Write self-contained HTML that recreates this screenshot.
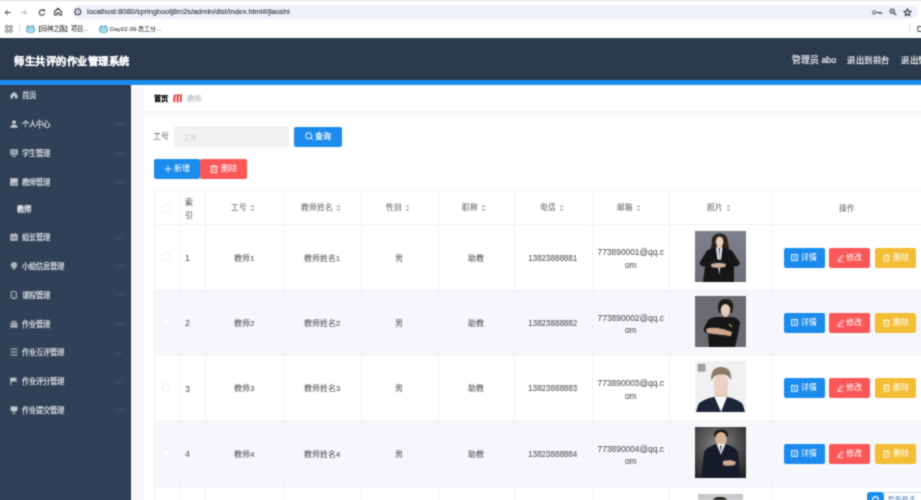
<!DOCTYPE html><html lang="zh-CN"><head><meta charset="utf-8"><style>
*{margin:0;padding:0;box-sizing:border-box}
html,body{width:921px;height:500px;overflow:hidden;background:#fff;font-family:"Liberation Sans",sans-serif}
div,span,svg{position:absolute}
.t{white-space:nowrap;will-change:transform}
.s{-webkit-text-stroke:0.06px currentColor}
</style></head><body><svg width="0" height="0" style="left:0;top:0"><filter id="bl" x="0" y="0" width="100%" height="100%" color-interpolation-filters="sRGB"><feConvolveMatrix order="3" kernelMatrix="1 2 1 2 8 2 1 2 1" divisor="20" edgeMode="duplicate"/></filter></svg><div id="root" style="left:0;top:0;width:940px;height:520px;filter:url(#bl)">
<div style="left:0px;top:0px;width:940px;height:38px;background:#fff"></div>
<div style="left:0px;top:0px;width:940px;height:1.3px;background:#e3e3e3"></div>
<div style="left:71.5px;top:4.5px;width:846px;height:14.5px;background:#edf1f9;border-radius:7.5px"></div>
<svg style="left:3.5px;top:8.5px;" width="8" height="7" viewBox="0 0 8 7"><path d="M6.8 3.5H1.2M3.8 0.8L1 3.5L3.8 6.2" stroke="#3c4043" stroke-width="1" fill="none"/></svg>
<svg style="left:19.5px;top:8.5px;" width="8" height="7" viewBox="0 0 8 7"><path d="M1 3.5H6.6M4 0.8L6.8 3.5L4 6.2" stroke="#b4b7bb" stroke-width="1" fill="none"/></svg>
<svg style="left:37.5px;top:8.5px;" width="8" height="7" viewBox="0 0 8 7"><path d="M6.2 2A2.7 2.7 0 1 0 6.6 4.4" stroke="#3c4043" stroke-width="1.1" fill="none"/><path d="M4.6 0.6H7V3Z" fill="#3c4043"/></svg>
<svg style="left:53px;top:7px;" width="10" height="9" viewBox="0 0 10 9"><path d="M1.5 4.5L5 1.3L8.5 4.5V8H6.2V5.8H3.8V8H1.5Z" stroke="#3c4043" stroke-width="1.1" fill="none"/></svg>
<svg style="left:74px;top:7.8px;" width="8" height="8" viewBox="0 0 8 8"><circle cx="3.8" cy="3.8" r="3" stroke="#3c4043" stroke-width="1.1" fill="none"/><path d="M3.8 2.5V4.3" stroke="#3c4043" stroke-width="1"/></svg>
<div class="t" style="left:87.3px;top:7.6px;font-size:7.4px;line-height:7.4px;color:#303134;-webkit-text-stroke:0.1px #303134">localhost:8080/springbootj8m2s/admin/dist/index.html#/jiaoshi</div>
<svg style="left:872px;top:9.5px;" width="11" height="6" viewBox="0 0 11 6"><circle cx="2.2" cy="2.5" r="1.7" stroke="#505458" stroke-width="1" fill="none"/><path d="M4 2.5H9.5V4.3M7.5 2.5V4" stroke="#505458" stroke-width="1" fill="none"/></svg>
<svg style="left:888.5px;top:8px;" width="8" height="8" viewBox="0 0 8 8"><circle cx="3.2" cy="3.2" r="2.3" stroke="#3c4043" stroke-width="1" fill="none"/><path d="M4.9 4.9L7.2 7.2" stroke="#3c4043" stroke-width="1.1"/><path d="M2 3.2H4.4M3.2 2V4.4" stroke="#3c4043" stroke-width="0.6"/></svg>
<svg style="left:903px;top:7.8px;" width="9" height="9" viewBox="0 0 9 9"><path d="M4.5 0.8L5.5 3.2L8.2 3.4L6.1 5.1L6.8 7.8L4.5 6.3L2.2 7.8L2.9 5.1L0.8 3.4L3.5 3.2Z" stroke="#3c4043" stroke-width="1.1" fill="none" stroke-linejoin="round"/></svg>
<svg style="left:4.5px;top:25px;" width="8" height="8" viewBox="0 0 8 8"><g fill="none" stroke="#555" stroke-width="0.9"><rect x="0.5" y="0.5" width="2.6" height="2.6" rx="0.8"/><rect x="4.6" y="0.5" width="2.6" height="2.6" rx="0.8"/><rect x="0.5" y="4.6" width="2.6" height="2.6" rx="0.8"/><rect x="4.6" y="4.6" width="2.6" height="2.6" rx="0.8"/></g></svg>
<div style="left:19.3px;top:25px;width:0.8px;height:7px;background:#d5d7da"></div>
<svg style="left:25.8px;top:25.2px;" width="9" height="8" viewBox="0 0 9 8"><path d="M1.6 2L2 0.4L3.6 1.8M7.2 2L6.8 0.4L5.2 1.8" fill="#4c9dc0" stroke="#4c9dc0" stroke-width="0.8"/><rect x="0.7" y="1.8" width="7.6" height="5.4" rx="1.6" fill="#c4eefa" stroke="#4c9dc0" stroke-width="1.1"/><circle cx="3.2" cy="4.3" r="0.75" fill="#3f87a6"/><circle cx="5.8" cy="4.3" r="0.75" fill="#3f87a6"/></svg>
<div class="t" style="left:34.8px;top:25.5px;font-size:6.3px;line-height:6.3px;color:#202124;">【码神之路】项目...</div>
<svg style="left:98.8px;top:25.2px;" width="9" height="8" viewBox="0 0 9 8"><path d="M1.6 2L2 0.4L3.6 1.8M7.2 2L6.8 0.4L5.2 1.8" fill="#4c9dc0" stroke="#4c9dc0" stroke-width="0.8"/><rect x="0.7" y="1.8" width="7.6" height="5.4" rx="1.6" fill="#c4eefa" stroke="#4c9dc0" stroke-width="1.1"/><circle cx="3.2" cy="4.3" r="0.75" fill="#3f87a6"/><circle cx="5.8" cy="4.3" r="0.75" fill="#3f87a6"/></svg>
<div class="t" style="left:109.5px;top:25.5px;font-size:6.1px;line-height:6.1px;color:#202124;">Day02-09-员工分...</div>
<div style="left:909.3px;top:25px;width:0.8px;height:7px;background:#d5d7da"></div>
<svg style="left:916.5px;top:26px;" width="6" height="6" viewBox="0 0 6 6"><path d="M5.5 0.6H0.8V5.4H5.5" stroke="#3c4043" stroke-width="1" fill="none"/></svg>
<div style="left:0px;top:38.3px;width:940px;height:41.7px;background:#2c3a4d"></div>
<div class="t" style="left:14.2px;top:56.5px;font-size:10.3px;line-height:10.3px;color:#fff;font-weight:bold;-webkit-text-stroke:0.2px #fff;letter-spacing:0.5px">师生共评的作业管理系统</div>
<div class="t" style="left:792px;top:56px;font-size:8.8px;line-height:8.8px;color:#fff;-webkit-text-stroke:0.15px #fff">管理员 abo</div>
<div class="t" style="left:847px;top:56.3px;font-size:8.3px;line-height:8.3px;color:#fff;-webkit-text-stroke:0.15px #fff;letter-spacing:0.6px">退出到前台</div>
<div class="t" style="left:901px;top:56.3px;font-size:8.3px;line-height:8.3px;color:#fff;-webkit-text-stroke:0.15px #fff;letter-spacing:0.6px">退出登录</div>
<div style="left:0px;top:80px;width:940px;height:5px;background:#1b8ced"></div>
<div style="left:0px;top:85px;width:131px;height:435px;background:#304157"></div>
<svg style="left:9.5px;top:91px;" width="8" height="8" viewBox="0 0 8 8"><path d="M0.5 4L4 0.8L7.5 4V7.5H5V5.2H3V7.5H0.5Z" fill="#c4c9d1"/></svg>
<div class="t" style="left:22px;top:91.5px;font-size:7.45px;line-height:7.45px;color:#f4f5f7;-webkit-text-stroke:0.1px #f4f5f7">首页</div>
<svg style="left:9.5px;top:120px;" width="8" height="8" viewBox="0 0 8 8"><circle cx="4" cy="2.2" r="1.9" fill="#c4c9d1"/><path d="M0.3 7.8C0.5 5.2 2 4.6 4 4.6C6 4.6 7.5 5.2 7.7 7.8Z" fill="#c4c9d1"/></svg>
<div class="t" style="left:22px;top:120.5px;font-size:7.45px;line-height:7.45px;color:#f4f5f7;-webkit-text-stroke:0.1px #f4f5f7">个人中心</div>
<svg style="left:115px;top:121.5px;" width="9" height="5" viewBox="0 0 9 5"><path d="M1 1L4.5 3.5L8 1" stroke="#4f5e73" stroke-width="0.8" fill="none"/></svg>
<svg style="left:9.5px;top:149px;" width="8" height="8" viewBox="0 0 8 8"><rect x="0.3" y="0.3" width="7.4" height="5.4" fill="#c4c9d1"/><path d="M1.5 2H6.5M1.5 3.8H6.5" stroke="#304157" stroke-width="0.7"/><path d="M2 7.3H6" stroke="#c4c9d1" stroke-width="1.1"/></svg>
<div class="t" style="left:22px;top:149.5px;font-size:7.45px;line-height:7.45px;color:#f4f5f7;-webkit-text-stroke:0.1px #f4f5f7">学生管理</div>
<svg style="left:115px;top:150.5px;" width="9" height="5" viewBox="0 0 9 5"><path d="M1 1L4.5 3.5L8 1" stroke="#4f5e73" stroke-width="0.8" fill="none"/></svg>
<svg style="left:9.5px;top:178px;" width="8" height="8" viewBox="0 0 8 8"><rect x="0.2" y="0.2" width="7.6" height="7.6" fill="#c4c9d1"/><path d="M1 7L3.3 4L4.8 5.5L7 3.2V7Z" fill="#8a94a3"/></svg>
<div class="t" style="left:22px;top:178.5px;font-size:7.45px;line-height:7.45px;color:#f4f5f7;-webkit-text-stroke:0.1px #f4f5f7">教师管理</div>
<svg style="left:115px;top:179.5px;" width="9" height="5" viewBox="0 0 9 5"><path d="M1 3.5L4.5 1L8 3.5" stroke="#4f5e73" stroke-width="0.8" fill="none"/></svg>
<svg style="left:9.5px;top:233px;" width="8" height="8" viewBox="0 0 8 8"><rect x="0.3" y="1.2" width="7.4" height="6.5" fill="#c4c9d1"/><path d="M2.5 0V2M5.5 0V2" stroke="#c4c9d1" stroke-width="0.9"/><path d="M1.5 3.8H6.5M1.5 5.6H6.5" stroke="#304157" stroke-width="0.7"/></svg>
<div class="t" style="left:22px;top:233.5px;font-size:7.45px;line-height:7.45px;color:#f4f5f7;-webkit-text-stroke:0.1px #f4f5f7">组长管理</div>
<svg style="left:115px;top:234.5px;" width="9" height="5" viewBox="0 0 9 5"><path d="M1 1L4.5 3.5L8 1" stroke="#4f5e73" stroke-width="0.8" fill="none"/></svg>
<svg style="left:9.5px;top:262px;" width="8" height="8" viewBox="0 0 8 8"><path d="M4 8L1 4.2A3.2 3.2 0 1 1 7 4.2Z" fill="#aab1bb"/></svg>
<div class="t" style="left:22px;top:262.5px;font-size:7.45px;line-height:7.45px;color:#f4f5f7;-webkit-text-stroke:0.1px #f4f5f7">小组信息管理</div>
<svg style="left:115px;top:263.5px;" width="9" height="5" viewBox="0 0 9 5"><path d="M1 1L4.5 3.5L8 1" stroke="#4f5e73" stroke-width="0.8" fill="none"/></svg>
<svg style="left:9.5px;top:291px;" width="8" height="8" viewBox="0 0 8 8"><rect x="1.3" y="0.4" width="5" height="7.2" rx="0.8" fill="none" stroke="#c4c9d1" stroke-width="1"/><path d="M3.2 6.2H4.4" stroke="#c4c9d1" stroke-width="0.8"/></svg>
<div class="t" style="left:22px;top:291.5px;font-size:7.45px;line-height:7.45px;color:#f4f5f7;-webkit-text-stroke:0.1px #f4f5f7">课程管理</div>
<svg style="left:115px;top:292.5px;" width="9" height="5" viewBox="0 0 9 5"><path d="M1 1L4.5 3.5L8 1" stroke="#4f5e73" stroke-width="0.8" fill="none"/></svg>
<svg style="left:9.5px;top:320px;" width="8" height="8" viewBox="0 0 8 8"><path d="M0.5 3.2H7.5V7.5H0.5Z" fill="#c4c9d1"/><path d="M2 1.2H6M1.2 2.2H6.8" stroke="#c4c9d1" stroke-width="0.8"/><path d="M0.5 5H7.5" stroke="#304157" stroke-width="0.7"/></svg>
<div class="t" style="left:22px;top:320.5px;font-size:7.45px;line-height:7.45px;color:#f4f5f7;-webkit-text-stroke:0.1px #f4f5f7">作业管理</div>
<svg style="left:115px;top:321.5px;" width="9" height="5" viewBox="0 0 9 5"><path d="M1 1L4.5 3.5L8 1" stroke="#4f5e73" stroke-width="0.8" fill="none"/></svg>
<svg style="left:9.5px;top:348px;" width="8" height="8" viewBox="0 0 8 8"><path d="M0.5 1H7.5M0.5 4H7.5M0.5 7H7.5" stroke="#c4c9d1" stroke-width="1"/></svg>
<div class="t" style="left:22px;top:348.5px;font-size:7.45px;line-height:7.45px;color:#f4f5f7;-webkit-text-stroke:0.1px #f4f5f7">作业互评管理</div>
<svg style="left:115px;top:349.5px;" width="9" height="5" viewBox="0 0 9 5"><path d="M1 1L4.5 3.5L8 1" stroke="#4f5e73" stroke-width="0.8" fill="none"/></svg>
<svg style="left:9.5px;top:377px;" width="8" height="8" viewBox="0 0 8 8"><path d="M0.8 0.5V8" stroke="#c4c9d1" stroke-width="1"/><path d="M0.8 0.8H7.3L5.8 2.6L7.3 4.4H0.8Z" fill="#c4c9d1"/></svg>
<div class="t" style="left:22px;top:377.5px;font-size:7.45px;line-height:7.45px;color:#f4f5f7;-webkit-text-stroke:0.1px #f4f5f7">作业评分管理</div>
<svg style="left:115px;top:378.5px;" width="9" height="5" viewBox="0 0 9 5"><path d="M1 1L4.5 3.5L8 1" stroke="#4f5e73" stroke-width="0.8" fill="none"/></svg>
<svg style="left:9.5px;top:406px;" width="8" height="8" viewBox="0 0 8 8"><path d="M0.5 0.5H7.5V3.5C7.5 5 6 5.5 4 5.5C2 5.5 0.5 5 0.5 3.5Z" fill="#c4c9d1"/><path d="M4 5.5V7.5M2.5 7.6H5.5" stroke="#c4c9d1" stroke-width="0.9"/></svg>
<div class="t" style="left:22px;top:406.5px;font-size:7.45px;line-height:7.45px;color:#f4f5f7;-webkit-text-stroke:0.1px #f4f5f7">作业提交管理</div>
<svg style="left:115px;top:407.5px;" width="9" height="5" viewBox="0 0 9 5"><path d="M1 1L4.5 3.5L8 1" stroke="#4f5e73" stroke-width="0.8" fill="none"/></svg>
<div class="t" style="left:17.2px;top:205.8px;font-size:7.45px;line-height:7.45px;color:#f4f5f7;font-weight:bold">教师</div>
<div style="left:131px;top:85px;width:809px;height:435px;background:#f7f9fc"></div>
<div style="left:143.8px;top:85px;width:796.2px;height:25.5px;background:#fff;box-shadow:0 1px 2px rgba(0,0,0,0.05)"></div>
<div class="t" style="left:153.9px;top:94.8px;font-size:7.2px;line-height:7.2px;color:#111;font-weight:bold;-webkit-text-stroke:0.1px #111">首页</div>
<svg style="left:172.5px;top:93.8px;" width="10" height="9" viewBox="0 0 10 9"><path d="M2.2 1.2Q0.6 4.5 1.6 8M5.2 0.8Q3.9 4.5 4.8 8.4M8.3 1.2Q7.1 4.5 7.9 8" stroke="#e6201c" stroke-width="1.7" fill="none"/><path d="M1.5 1.2L9 0.8" stroke="#b81d18" stroke-width="0.8"/></svg>
<div class="t" style="left:187px;top:94.5px;font-size:7.4px;line-height:7.4px;color:#aeb4be;-webkit-text-stroke:0.1px #aeb4be">教师</div>
<div style="left:143.8px;top:115.5px;width:796.2px;height:404.5px;background:#fff"></div>
<div class="t" style="left:153px;top:133px;font-size:8px;line-height:8px;color:#606266;">工号</div>
<div style="left:174.3px;top:126.3px;width:114.5px;height:21px;background:#f3f1f0;border-radius:2px"></div>
<div class="t" style="left:183px;top:133.5px;font-size:7.2px;line-height:7.2px;color:#c8cacf;">工号</div>
<div style="left:294.2px;top:126.8px;width:48px;height:19.8px;background:#1b8ced;border-radius:2px"></div>
<svg style="left:304.5px;top:132px;" width="9" height="9" viewBox="0 0 9 9"><circle cx="3.8" cy="3.8" r="3" stroke="#fff" stroke-width="1" fill="none"/><path d="M6 6L7.8 7.8" stroke="#fff" stroke-width="1"/></svg>
<div class="t" style="left:315px;top:132.5px;font-size:8px;line-height:8px;color:#fff;-webkit-text-stroke:0.2px #fff">查询</div>
<div style="left:153.7px;top:158.7px;width:46.5px;height:20px;background:#1b8ced;border-radius:2px"></div>
<svg style="left:163.5px;top:164.5px;" width="8" height="8" viewBox="0 0 8 8"><path d="M4 0.5V7.5M0.5 4H7.5" stroke="#fff" stroke-width="0.85"/></svg>
<div class="t" style="left:174px;top:164.5px;font-size:8px;line-height:8px;color:#fff;">新增</div>
<div style="left:200.2px;top:158.7px;width:46.5px;height:20px;background:#fa5758;border-radius:2px"></div>
<svg style="left:210px;top:164.5px;" width="8" height="8" viewBox="0 0 8 8"><rect x="1.2" y="1.8" width="5.6" height="5.7" stroke="#fff" stroke-width="0.9" fill="none"/><path d="M0.3 1.3H7.7M3 0.3H5M3 3.5V5.8M5 3.5V5.8" stroke="#fff" stroke-width="0.8"/></svg>
<div class="t" style="left:221px;top:164.5px;font-size:8px;line-height:8px;color:#fff;">删除</div>
<div style="left:153.8px;top:289.6px;width:786.2px;height:65.19999999999999px;background:#f5f7fa"></div>
<div style="left:153.8px;top:420.2px;width:786.2px;height:66.10000000000002px;background:#f5f7fa"></div>
<div style="left:153.8px;top:190.3px;width:786.2px;height:1px;background:#f1f2f6"></div>
<div style="left:153.8px;top:224.3px;width:786.2px;height:1px;background:#f1f2f6"></div>
<div style="left:153.8px;top:289.6px;width:786.2px;height:1px;background:#f1f2f6"></div>
<div style="left:153.8px;top:354.8px;width:786.2px;height:1px;background:#f1f2f6"></div>
<div style="left:153.8px;top:420.2px;width:786.2px;height:1px;background:#f1f2f6"></div>
<div style="left:153.8px;top:486.3px;width:786.2px;height:1px;background:#f1f2f6"></div>
<div style="left:153.8px;top:552px;width:786.2px;height:1px;background:#f1f2f6"></div>
<div style="left:153.8px;top:190.3px;width:1px;height:329.7px;background:#f1f2f6"></div>
<div style="left:179.6px;top:190.3px;width:1px;height:329.7px;background:#f1f2f6"></div>
<div style="left:204.6px;top:190.3px;width:1px;height:329.7px;background:#f1f2f6"></div>
<div style="left:283px;top:190.3px;width:1px;height:329.7px;background:#f1f2f6"></div>
<div style="left:361px;top:190.3px;width:1px;height:329.7px;background:#f1f2f6"></div>
<div style="left:437.5px;top:190.3px;width:1px;height:329.7px;background:#f1f2f6"></div>
<div style="left:514px;top:190.3px;width:1px;height:329.7px;background:#f1f2f6"></div>
<div style="left:591.5px;top:190.3px;width:1px;height:329.7px;background:#f1f2f6"></div>
<div style="left:669px;top:190.3px;width:1px;height:329.7px;background:#f1f2f6"></div>
<div style="left:771.2px;top:190.3px;width:1px;height:329.7px;background:#f1f2f6"></div>
<div style="left:162px;top:204.3px;width:8.5px;height:8.5px;border:1px solid #f0f1f4;border-radius:1.5px;background:#fff"></div>
<div class="t" style="left:185px;top:199.3px;font-size:7.9px;line-height:7.9px;color:#6e6e6e;-webkit-text-stroke:0.2px #6e6e6e">索</div>
<div class="t" style="left:185px;top:212px;font-size:7.9px;line-height:7.9px;color:#6e6e6e;-webkit-text-stroke:0.2px #6e6e6e">引</div>
<div class="t" style="left:204.1px;top:203.8px;width:78.4px;text-align:center;font-size:7.7px;line-height:8px;color:#727272;-webkit-text-stroke:0.12px #727272">工号<svg style="position:relative;display:inline-block;vertical-align:middle;margin-left:3px" width="5" height="8" viewBox="0 0 5 8"><path d="M0.4 3.1L2.5 1L4.6 3.1ZM0.4 4.9L2.5 7L4.6 4.9Z" fill="#9da1a8"/></svg></div>
<div class="t" style="left:281.5px;top:203.8px;width:78px;text-align:center;font-size:7.7px;line-height:8px;color:#727272;-webkit-text-stroke:0.12px #727272">教师姓名<svg style="position:relative;display:inline-block;vertical-align:middle;margin-left:3px" width="5" height="8" viewBox="0 0 5 8"><path d="M0.4 3.1L2.5 1L4.6 3.1ZM0.4 4.9L2.5 7L4.6 4.9Z" fill="#9da1a8"/></svg></div>
<div class="t" style="left:359.5px;top:203.8px;width:76.5px;text-align:center;font-size:7.7px;line-height:8px;color:#727272;-webkit-text-stroke:0.12px #727272">性别<svg style="position:relative;display:inline-block;vertical-align:middle;margin-left:3px" width="5" height="8" viewBox="0 0 5 8"><path d="M0.4 3.1L2.5 1L4.6 3.1ZM0.4 4.9L2.5 7L4.6 4.9Z" fill="#9da1a8"/></svg></div>
<div class="t" style="left:436.0px;top:203.8px;width:76.5px;text-align:center;font-size:7.7px;line-height:8px;color:#727272;-webkit-text-stroke:0.12px #727272">职称<svg style="position:relative;display:inline-block;vertical-align:middle;margin-left:3px" width="5" height="8" viewBox="0 0 5 8"><path d="M0.4 3.1L2.5 1L4.6 3.1ZM0.4 4.9L2.5 7L4.6 4.9Z" fill="#9da1a8"/></svg></div>
<div class="t" style="left:512.5px;top:203.8px;width:77.5px;text-align:center;font-size:7.7px;line-height:8px;color:#727272;-webkit-text-stroke:0.12px #727272">电话<svg style="position:relative;display:inline-block;vertical-align:middle;margin-left:3px" width="5" height="8" viewBox="0 0 5 8"><path d="M0.4 3.1L2.5 1L4.6 3.1ZM0.4 4.9L2.5 7L4.6 4.9Z" fill="#9da1a8"/></svg></div>
<div class="t" style="left:590.0px;top:203.8px;width:77.5px;text-align:center;font-size:7.7px;line-height:8px;color:#727272;-webkit-text-stroke:0.12px #727272">邮箱<svg style="position:relative;display:inline-block;vertical-align:middle;margin-left:3px" width="5" height="8" viewBox="0 0 5 8"><path d="M0.4 3.1L2.5 1L4.6 3.1ZM0.4 4.9L2.5 7L4.6 4.9Z" fill="#9da1a8"/></svg></div>
<div class="t" style="left:667.5px;top:203.8px;width:102.20000000000005px;text-align:center;font-size:7.7px;line-height:8px;color:#727272;-webkit-text-stroke:0.12px #727272">照片<svg style="position:relative;display:inline-block;vertical-align:middle;margin-left:3px" width="5" height="8" viewBox="0 0 5 8"><path d="M0.4 3.1L2.5 1L4.6 3.1ZM0.4 4.9L2.5 7L4.6 4.9Z" fill="#9da1a8"/></svg></div>
<div class="t s" style="left:772.2px;top:204.5px;width:149.79999999999995px;text-align:center;font-size:7.7px;line-height:7.7px;color:#707070;">操作</div>
<div style="left:161.5px;top:252.45000000000005px;width:8.5px;height:8.5px;border:1px solid #f0f1f4;border-radius:1.5px;background:#fff"></div>
<div class="t" style="left:185.3px;top:254.05000000000004px;font-size:9px;line-height:9px;color:#505256;">1</div>
<div class="t s" style="left:204.6px;top:254.85000000000005px;width:78.4px;text-align:center;font-size:7.9px;line-height:7.9px;color:#505256;">教师1</div>
<div class="t s" style="left:283px;top:254.85000000000005px;width:78px;text-align:center;font-size:7.9px;line-height:7.9px;color:#505256;">教师姓名1</div>
<div class="t s" style="left:361px;top:254.85000000000005px;width:76.5px;text-align:center;font-size:7.9px;line-height:7.9px;color:#505256;">男</div>
<div class="t s" style="left:437.5px;top:254.85000000000005px;width:76.5px;text-align:center;font-size:7.9px;line-height:7.9px;color:#505256;">助教</div>
<div class="t s" style="left:514px;top:254.65000000000003px;width:77.5px;text-align:center;font-size:8px;line-height:8px;color:#505256;transform:scaleY(1.18)">13823888881</div>
<div class="t s" style="left:591.5px;top:248.35000000000005px;width:77.5px;text-align:center;font-size:8.4px;line-height:8.4px;color:#505256;transform:scaleY(1.1)">773890001@qq.c</div>
<div class="t s" style="left:591.5px;top:261.15000000000003px;width:77.5px;text-align:center;font-size:8.4px;line-height:8.4px;color:#505256;transform:scaleY(1.1)">om</div>
<svg style="left:695.2px;top:230.9px;" width="51" height="51" viewBox="0 0 51 51"><defs><linearGradient id="p1" x1="0" y1="0" x2="0" y2="1"><stop offset="0" stop-color="#7e818c"/><stop offset="1" stop-color="#6c6f79"/></linearGradient><filter id="f1"><feGaussianBlur stdDeviation="0.5"/></filter></defs>
<rect width="51" height="51" fill="url(#p1)"/><g filter="url(#f1)">
<path d="M17 12C16 5 20 2.5 24.5 2.5C29 2.5 33 5 33 11L35 24L31 27H18L14 24Z" fill="#2f231e"/>
<ellipse cx="24.6" cy="10.8" rx="3.8" ry="5.2" fill="#ead0bd"/>
<path d="M22 15H27V18H22Z" fill="#e0c2ae"/>
<path d="M11 21C13 18 18 17 21 17H28C31 17 36 18 38 21L45 32C44 35 41 36 39 35L39 51H8L10 35C8 36 5 35 4.5 32Z" fill="#151519"/>
<path d="M21 16.5L24.2 44L27.5 16.5Z" fill="#eceef1"/>
<path d="M23.6 17L24.2 30L24.9 17Z" fill="#26384a"/>
<path d="M13 30C17 28 27 28 32 30L31 36C27 37 18 37 14 36Z" fill="#1b1b20"/>
<path d="M16 33C20 31.5 27 31.5 31 33L30 36C26 37 20 37 16.5 36Z" fill="#cfae9a"/>
</g></svg>
<div style="left:783.7px;top:247.75000000000006px;width:41.2px;height:19.8px;background:#1b8ced;border-radius:2px"></div>
<svg style="left:791px;top:254.05000000000007px;" width="7" height="7" viewBox="0 0 7 7"><rect x="0.6" y="0.6" width="5.8" height="5.8" stroke="#fff" stroke-width="0.9" fill="none"/><path d="M2 2.5H5M2 4.5H5" stroke="#fff" stroke-width="0.7"/></svg>
<div class="t" style="left:800.5px;top:253.75000000000006px;font-size:7.9px;line-height:7.9px;color:#fff;">详情</div>
<div style="left:828.9px;top:247.75000000000006px;width:41.2px;height:19.8px;background:#fa5758;border-radius:2px"></div>
<svg style="left:836.5px;top:253.75000000000006px;" width="7" height="8" viewBox="0 0 7 8"><path d="M1 7L1.6 4.8L5 1.2L6.2 2.4L2.8 6Z" stroke="#fff" stroke-width="0.8" fill="none"/><path d="M0.5 7.6H6.5" stroke="#fff" stroke-width="0.7"/></svg>
<div class="t" style="left:846px;top:253.75000000000006px;font-size:7.9px;line-height:7.9px;color:#fff;">修改</div>
<div style="left:874.5px;top:247.75000000000006px;width:41.2px;height:19.8px;background:#f3bd35;border-radius:2px"></div>
<svg style="left:882.5px;top:253.75000000000006px;" width="7" height="8" viewBox="0 0 7 8"><rect x="1" y="1.8" width="5" height="5.4" stroke="#fff" stroke-width="0.8" fill="none"/><path d="M0.2 1.3H6.8M2.6 0.4H4.4M2.6 3.5V5.5M4.4 3.5V5.5" stroke="#fff" stroke-width="0.7"/></svg>
<div class="t" style="left:892.5px;top:253.75000000000006px;font-size:7.9px;line-height:7.9px;color:#fff;">删除</div>
<div style="left:161.5px;top:317.70000000000005px;width:8.5px;height:8.5px;border:1px solid #f0f1f4;border-radius:1.5px;background:#fff"></div>
<div class="t" style="left:185.3px;top:319.30000000000007px;font-size:9px;line-height:9px;color:#505256;">2</div>
<div class="t s" style="left:204.6px;top:320.1px;width:78.4px;text-align:center;font-size:7.9px;line-height:7.9px;color:#505256;">教师2</div>
<div class="t s" style="left:283px;top:320.1px;width:78px;text-align:center;font-size:7.9px;line-height:7.9px;color:#505256;">教师姓名2</div>
<div class="t s" style="left:361px;top:320.1px;width:76.5px;text-align:center;font-size:7.9px;line-height:7.9px;color:#505256;">男</div>
<div class="t s" style="left:437.5px;top:320.1px;width:76.5px;text-align:center;font-size:7.9px;line-height:7.9px;color:#505256;">助教</div>
<div class="t s" style="left:514px;top:319.90000000000003px;width:77.5px;text-align:center;font-size:8px;line-height:8px;color:#505256;transform:scaleY(1.18)">13823888882</div>
<div class="t s" style="left:591.5px;top:313.6px;width:77.5px;text-align:center;font-size:8.4px;line-height:8.4px;color:#505256;transform:scaleY(1.1)">773890002@qq.c</div>
<div class="t s" style="left:591.5px;top:326.40000000000003px;width:77.5px;text-align:center;font-size:8.4px;line-height:8.4px;color:#505256;transform:scaleY(1.1)">om</div>
<svg style="left:695.2px;top:296.20000000000005px;" width="51" height="51" viewBox="0 0 51 51"><defs><filter id="f2"><feGaussianBlur stdDeviation="0.45"/></filter></defs>
<rect width="51" height="51" fill="#6c6c70"/><g filter="url(#f2)">
<path d="M23 13C22 6 26 3 31 3C36 3 39 6 38 13L37 17H24Z" fill="#1f1a18"/>
<ellipse cx="30.5" cy="14" rx="4.8" ry="6" fill="#e8cbb8"/>
<path d="M28 20H33V24H28Z" fill="#d8b8a2"/>
<path d="M12 26C14 22 19 21 24 21H36C40 21 44 23 45 27L43 38L40 51H14L13 38C10 37 8 35 9 32Z" fill="#141416"/>
<path d="M11 33C17 30 30 33 37 36L36 40C29 39 17 38 12 37Z" fill="#cba58e"/>
<path d="M34 28L37 31" stroke="#b89048" stroke-width="1.2"/>
</g></svg>
<div style="left:783.7px;top:313.00000000000006px;width:41.2px;height:19.8px;background:#1b8ced;border-radius:2px"></div>
<svg style="left:791px;top:319.30000000000007px;" width="7" height="7" viewBox="0 0 7 7"><rect x="0.6" y="0.6" width="5.8" height="5.8" stroke="#fff" stroke-width="0.9" fill="none"/><path d="M2 2.5H5M2 4.5H5" stroke="#fff" stroke-width="0.7"/></svg>
<div class="t" style="left:800.5px;top:319.00000000000006px;font-size:7.9px;line-height:7.9px;color:#fff;">详情</div>
<div style="left:828.9px;top:313.00000000000006px;width:41.2px;height:19.8px;background:#fa5758;border-radius:2px"></div>
<svg style="left:836.5px;top:319.00000000000006px;" width="7" height="8" viewBox="0 0 7 8"><path d="M1 7L1.6 4.8L5 1.2L6.2 2.4L2.8 6Z" stroke="#fff" stroke-width="0.8" fill="none"/><path d="M0.5 7.6H6.5" stroke="#fff" stroke-width="0.7"/></svg>
<div class="t" style="left:846px;top:319.00000000000006px;font-size:7.9px;line-height:7.9px;color:#fff;">修改</div>
<div style="left:874.5px;top:313.00000000000006px;width:41.2px;height:19.8px;background:#f3bd35;border-radius:2px"></div>
<svg style="left:882.5px;top:319.00000000000006px;" width="7" height="8" viewBox="0 0 7 8"><rect x="1" y="1.8" width="5" height="5.4" stroke="#fff" stroke-width="0.8" fill="none"/><path d="M0.2 1.3H6.8M2.6 0.4H4.4M2.6 3.5V5.5M4.4 3.5V5.5" stroke="#fff" stroke-width="0.7"/></svg>
<div class="t" style="left:892.5px;top:319.00000000000006px;font-size:7.9px;line-height:7.9px;color:#fff;">删除</div>
<div style="left:161.5px;top:383.0px;width:8.5px;height:8.5px;border:1px solid #f0f1f4;border-radius:1.5px;background:#fff"></div>
<div class="t" style="left:185.3px;top:384.6px;font-size:9px;line-height:9px;color:#505256;">3</div>
<div class="t s" style="left:204.6px;top:385.4px;width:78.4px;text-align:center;font-size:7.9px;line-height:7.9px;color:#505256;">教师3</div>
<div class="t s" style="left:283px;top:385.4px;width:78px;text-align:center;font-size:7.9px;line-height:7.9px;color:#505256;">教师姓名3</div>
<div class="t s" style="left:361px;top:385.4px;width:76.5px;text-align:center;font-size:7.9px;line-height:7.9px;color:#505256;">男</div>
<div class="t s" style="left:437.5px;top:385.4px;width:76.5px;text-align:center;font-size:7.9px;line-height:7.9px;color:#505256;">助教</div>
<div class="t s" style="left:514px;top:385.2px;width:77.5px;text-align:center;font-size:8px;line-height:8px;color:#505256;transform:scaleY(1.18)">13823888883</div>
<div class="t s" style="left:591.5px;top:378.9px;width:77.5px;text-align:center;font-size:8.4px;line-height:8.4px;color:#505256;transform:scaleY(1.1)">773890003@qq.c</div>
<div class="t s" style="left:591.5px;top:391.7px;width:77.5px;text-align:center;font-size:8.4px;line-height:8.4px;color:#505256;transform:scaleY(1.1)">om</div>
<svg style="left:695.2px;top:361.40000000000003px;" width="51" height="51" viewBox="0 0 51 51"><defs><filter id="f3"><feGaussianBlur stdDeviation="0.5"/></filter></defs>
<rect width="51" height="51" fill="#f1f1f3"/><g filter="url(#f3)">
<rect x="2.8" y="3" width="7.6" height="7.6" fill="#8e8e92"/><path d="M3.8 5.2H9.4M3.8 7.2H9.4M3.8 9.2H9.4" stroke="#c8c8cb" stroke-width="0.7"/>
<ellipse cx="26" cy="23" rx="7.3" ry="10.2" fill="#e9d2c2"/>
<path d="M19.5 28C21 34 31 34 32.5 28L32.5 38H19.5Z" fill="#e6cdbb"/>
<path d="M16.5 20C15 10 20 6 26 6C32 6 37 9 36 19L34.5 17C32 12 21 12 18 17Z" fill="#8b7a66"/>
<path d="M1 51L3 44C5 40 13 37 19 36H32C38 37 46 40 48 44L50 51Z" fill="#1d2537"/>
<path d="M19.5 36L26 51L32 36Z" fill="#fbfbfb"/>
</g></svg>
<div style="left:783.7px;top:378.3px;width:41.2px;height:19.8px;background:#1b8ced;border-radius:2px"></div>
<svg style="left:791px;top:384.6px;" width="7" height="7" viewBox="0 0 7 7"><rect x="0.6" y="0.6" width="5.8" height="5.8" stroke="#fff" stroke-width="0.9" fill="none"/><path d="M2 2.5H5M2 4.5H5" stroke="#fff" stroke-width="0.7"/></svg>
<div class="t" style="left:800.5px;top:384.3px;font-size:7.9px;line-height:7.9px;color:#fff;">详情</div>
<div style="left:828.9px;top:378.3px;width:41.2px;height:19.8px;background:#fa5758;border-radius:2px"></div>
<svg style="left:836.5px;top:384.3px;" width="7" height="8" viewBox="0 0 7 8"><path d="M1 7L1.6 4.8L5 1.2L6.2 2.4L2.8 6Z" stroke="#fff" stroke-width="0.8" fill="none"/><path d="M0.5 7.6H6.5" stroke="#fff" stroke-width="0.7"/></svg>
<div class="t" style="left:846px;top:384.3px;font-size:7.9px;line-height:7.9px;color:#fff;">修改</div>
<div style="left:874.5px;top:378.3px;width:41.2px;height:19.8px;background:#f3bd35;border-radius:2px"></div>
<svg style="left:882.5px;top:384.3px;" width="7" height="8" viewBox="0 0 7 8"><rect x="1" y="1.8" width="5" height="5.4" stroke="#fff" stroke-width="0.8" fill="none"/><path d="M0.2 1.3H6.8M2.6 0.4H4.4M2.6 3.5V5.5M4.4 3.5V5.5" stroke="#fff" stroke-width="0.7"/></svg>
<div class="t" style="left:892.5px;top:384.3px;font-size:7.9px;line-height:7.9px;color:#fff;">删除</div>
<div style="left:161.5px;top:448.75px;width:8.5px;height:8.5px;border:1px solid #f0f1f4;border-radius:1.5px;background:#fff"></div>
<div class="t" style="left:185.3px;top:450.35px;font-size:9px;line-height:9px;color:#505256;">4</div>
<div class="t s" style="left:204.6px;top:451.15px;width:78.4px;text-align:center;font-size:7.9px;line-height:7.9px;color:#505256;">教师4</div>
<div class="t s" style="left:283px;top:451.15px;width:78px;text-align:center;font-size:7.9px;line-height:7.9px;color:#505256;">教师姓名4</div>
<div class="t s" style="left:361px;top:451.15px;width:76.5px;text-align:center;font-size:7.9px;line-height:7.9px;color:#505256;">男</div>
<div class="t s" style="left:437.5px;top:451.15px;width:76.5px;text-align:center;font-size:7.9px;line-height:7.9px;color:#505256;">助教</div>
<div class="t s" style="left:514px;top:450.95px;width:77.5px;text-align:center;font-size:8px;line-height:8px;color:#505256;transform:scaleY(1.18)">13823888884</div>
<div class="t s" style="left:591.5px;top:444.65px;width:77.5px;text-align:center;font-size:8.4px;line-height:8.4px;color:#505256;transform:scaleY(1.1)">773890004@qq.c</div>
<div class="t s" style="left:591.5px;top:457.45px;width:77.5px;text-align:center;font-size:8.4px;line-height:8.4px;color:#505256;transform:scaleY(1.1)">om</div>
<svg style="left:695.2px;top:426.8px;" width="51" height="51" viewBox="0 0 51 51"><defs><radialGradient id="g4" cx="0.45" cy="0.35" r="0.75"><stop offset="0" stop-color="#858585"/><stop offset="0.6" stop-color="#4a4a4a"/><stop offset="1" stop-color="#262626"/></radialGradient><filter id="f4"><feGaussianBlur stdDeviation="0.45"/></filter></defs>
<rect width="51" height="51" fill="url(#g4)"/><g filter="url(#f4)">
<path d="M19 9C19 4 22 2.5 26 2.5C30 2.5 33 4 33 9L32 10H20Z" fill="#1b1512"/>
<ellipse cx="26" cy="12" rx="5.8" ry="7" fill="#d8b49c"/>
<path d="M6 51L9 26C10 21 16 19 21 17H31C36 19 42 21 43 26L46 51Z" fill="#161c2b"/>
<path d="M21.5 17L26 28L30.5 17Z" fill="#eeeeee"/>
<path d="M25.2 18.5L26 27L26.8 18.5Z" fill="#2a3a3a"/>
<path d="M28 34C32 33 38 33 41 35L40 38C36 39 31 39 28 38Z" fill="#cfab90"/>
</g></svg>
<div style="left:783.7px;top:444.05px;width:41.2px;height:19.8px;background:#1b8ced;border-radius:2px"></div>
<svg style="left:791px;top:450.35px;" width="7" height="7" viewBox="0 0 7 7"><rect x="0.6" y="0.6" width="5.8" height="5.8" stroke="#fff" stroke-width="0.9" fill="none"/><path d="M2 2.5H5M2 4.5H5" stroke="#fff" stroke-width="0.7"/></svg>
<div class="t" style="left:800.5px;top:450.05px;font-size:7.9px;line-height:7.9px;color:#fff;">详情</div>
<div style="left:828.9px;top:444.05px;width:41.2px;height:19.8px;background:#fa5758;border-radius:2px"></div>
<svg style="left:836.5px;top:450.05px;" width="7" height="8" viewBox="0 0 7 8"><path d="M1 7L1.6 4.8L5 1.2L6.2 2.4L2.8 6Z" stroke="#fff" stroke-width="0.8" fill="none"/><path d="M0.5 7.6H6.5" stroke="#fff" stroke-width="0.7"/></svg>
<div class="t" style="left:846px;top:450.05px;font-size:7.9px;line-height:7.9px;color:#fff;">修改</div>
<div style="left:874.5px;top:444.05px;width:41.2px;height:19.8px;background:#f3bd35;border-radius:2px"></div>
<svg style="left:882.5px;top:450.05px;" width="7" height="8" viewBox="0 0 7 8"><rect x="1" y="1.8" width="5" height="5.4" stroke="#fff" stroke-width="0.8" fill="none"/><path d="M0.2 1.3H6.8M2.6 0.4H4.4M2.6 3.5V5.5M4.4 3.5V5.5" stroke="#fff" stroke-width="0.7"/></svg>
<div class="t" style="left:892.5px;top:450.05px;font-size:7.9px;line-height:7.9px;color:#fff;">删除</div>
<div style="left:698px;top:494.4px;width:44.5px;height:6px;overflow:hidden"><svg style="left:0;top:0" width="45" height="20" viewBox="0 0 45 20"><rect width="45" height="20" fill="#c6c6cb"/><ellipse cx="22" cy="8" rx="8" ry="5" fill="#1e1a18"/></svg></div>
<div style="left:866.8px;top:492.4px;width:17.2px;height:28px;background:#1b8ced;border-radius:3px"></div>
<svg style="left:871px;top:495px;" width="9" height="6" viewBox="0 0 9 6"><circle cx="4.5" cy="4.5" r="2.8" stroke="#fff" stroke-width="1.2" fill="none"/></svg>
<div style="left:884px;top:492px;width:56px;height:28px;background:#fff;border-top:1px solid #c9d9e8"></div>
<div class="t" style="left:888px;top:496.5px;font-size:6.5px;line-height:6.5px;color:#4a78b0;">智能助手</div>
</div></body></html>
